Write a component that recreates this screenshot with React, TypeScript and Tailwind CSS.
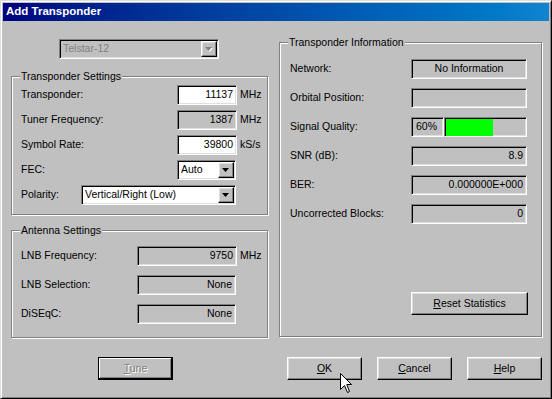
import React from "react";

const sunken =
  "border border-t-[#808080] border-l-[#808080] border-r-white border-b-white shadow-[inset_1px_1px_0_#000,inset_-1px_-1px_0_#dfdfdf]";
const raised =
  "border border-t-white border-l-white border-r-black border-b-black shadow-[inset_-1px_-1px_0_#808080,inset_1px_1px_0_#dfdfdf]";
const disabledText = "text-[#808080] [text-shadow:1px_1px_0_#fff]";

function Field({ value, w, white, center }: { value?: string; w: string; white?: boolean; center?: boolean }) {
  return (
    <div
      className={`${sunken} ${w} h-[20px] flex items-center px-[3px] ${white ? "bg-white" : "bg-[#c0c0c0]"} ${
        center ? "justify-center" : "justify-end"
      }`}
    >
      {value}
    </div>
  );
}

function Arrow({ disabled }: { disabled?: boolean }) {
  return (
    <svg width="8" height="5" viewBox="0 0 8 5" className="block">
      {disabled && <polygon points="1,1 8,1 4.5,5" fill="#fff" />}
      <polygon points="0,0 7,0 3.5,4" fill={disabled ? "#808080" : "#000"} />
    </svg>
  );
}

function Combo({ text, w, disabled }: { text: string; w: string; disabled?: boolean }) {
  return (
    <div className={`${sunken} ${w} h-[20px] flex items-center ${disabled ? "bg-[#c0c0c0]" : "bg-white"}`}>
      <span className={`flex-1 pl-[3px] truncate ${disabled ? "text-[#808080]" : ""}`}>{text}</span>
      <div className={`${raised} w-[16px] h-[16px] mr-[1px] bg-[#c0c0c0] flex items-center justify-center`}>
        <Arrow disabled={disabled} />
      </div>
    </div>
  );
}

function Button({
  label,
  hot,
  w,
  disabled,
  isDefault,
}: {
  label: string;
  hot: number;
  w: string;
  disabled?: boolean;
  isDefault?: boolean;
}) {
  const frame = isDefault
    ? "border border-black shadow-[inset_-1px_-1px_0_#000,inset_1px_1px_0_#fff,inset_-2px_-2px_0_#808080]"
    : raised;
  return (
    <div className={`${frame} ${w} h-[23px] bg-[#c0c0c0] flex items-center justify-center ${disabled ? disabledText : ""}`}>
      <span>
        {label.slice(0, hot)}
        <span className="underline underline-offset-[1px]">{label[hot]}</span>
        {label.slice(hot + 1)}
      </span>
    </div>
  );
}

function Group({ title, className, children }: { title: string; className: string; children: React.ReactNode }) {
  return (
    <div className={`relative border border-[#808080] shadow-[inset_1px_1px_0_#fff,1px_1px_0_#fff] ${className}`}>
      <span className="absolute left-[8px] -top-[7px] px-[1px] bg-[#c0c0c0] leading-[13px]">{title}</span>
      {children}
    </div>
  );
}

function Row({ label, lw, children }: { label: string; lw: string; children: React.ReactNode }) {
  return (
    <div className="flex items-center h-[20px]">
      <span className={lw}>{label}</span>
      {children}
    </div>
  );
}

export default function App() {
  return (
    <div className="w-[552px] h-[399px] bg-[#c0c0c0] p-[2px] border border-t-[#dfdfdf] border-l-[#dfdfdf] border-r-black border-b-black shadow-[inset_1px_1px_0_#fff,inset_-1px_-1px_0_#808080] font-['Liberation_Sans',Arial,sans-serif] text-[10.5px] text-black overflow-hidden">
      {/* title bar */}
      <div className="h-[18px] bg-gradient-to-r from-[#000080] to-[#1084d0] flex items-center pl-[3px]">
        <span className="text-white font-bold text-[11.5px]">Add Transponder</span>
      </div>

      <div className="flex h-[317px]">
        {/* left column */}
        <div className="ml-[8px] w-[257px] flex flex-col">
          <div className="mt-[18px] ml-[48px]">
            <Combo text="Telstar-12" w="w-[160px]" disabled />
          </div>

          <Group title="Transponder Settings" className="mt-[17px] h-[139px] pt-[8px] pl-[9px] flex flex-col gap-[5px]">
            <Row label="Transponder:" lw="w-[156px]">
              <Field value="11137" w="w-[60px]" white />
              <span className="ml-[3px]">MHz</span>
            </Row>
            <Row label="Tuner Frequency:" lw="w-[156px]">
              <Field value="1387" w="w-[60px]" />
              <span className="ml-[3px]">MHz</span>
            </Row>
            <Row label="Symbol Rate:" lw="w-[156px]">
              <Field value="39800" w="w-[60px]" white />
              <span className="ml-[3px]">kS/s</span>
            </Row>
            <Row label="FEC:" lw="w-[156px]">
              <Combo text="Auto" w="w-[59px]" />
            </Row>
            <Row label="Polarity:" lw="w-[60px]">
              <Combo text="Vertical/Right (Low)" w="w-[155px]" />
            </Row>
          </Group>

          <Group title="Antenna Settings" className="mt-[15px] h-[108px] pt-[15px] pl-[9px] flex flex-col gap-[9px]">
            <Row label="LNB Frequency:" lw="w-[116px]">
              <Field value="9750" w="w-[100px]" />
              <span className="ml-[3px]">MHz</span>
            </Row>
            <Row label="LNB Selection:" lw="w-[116px]">
              <Field value="None" w="w-[99px]" />
            </Row>
            <Row label="DiSEqC:" lw="w-[116px]">
              <Field value="None" w="w-[99px]" />
            </Row>
          </Group>
        </div>

        {/* right column */}
        <Group
          title="Transponder Information"
          className="ml-[11px] mt-[21px] w-[263px] h-[295px] pt-[16px] pl-[10px] flex flex-col gap-[9px]"
        >
          <Row label="Network:" lw="w-[121px]">
            <Field value="No Information" w="w-[116px]" center />
          </Row>
          <Row label="Orbital Position:" lw="w-[121px]">
            <Field w="w-[116px]" />
          </Row>
          <Row label="Signal Quality:" lw="w-[121px]">
            <div className={`${sunken} w-[33px] h-[20px] flex items-center pl-[4px]`}>60%</div>
            <div className={`${sunken} w-[83px] h-[20px] pt-[1px] pl-[1px] pb-0`}>
              <div className="w-[47px] h-full bg-[#00ff00]" />
            </div>
          </Row>
          <Row label="SNR (dB):" lw="w-[121px]">
            <Field value="8.9" w="w-[116px]" />
          </Row>
          <Row label="BER:" lw="w-[121px]">
            <Field value="0.000000E+000" w="w-[116px]" />
          </Row>
          <Row label="Uncorrected Blocks:" lw="w-[121px]">
            <Field value="0" w="w-[116px]" />
          </Row>
          <div className="mt-auto mb-[21px] ml-[121px]">
            <Button label="Reset Statistics" hot={0} w="w-[117px]" />
          </div>
        </Group>
      </div>

      {/* bottom buttons */}
      <div className="flex mt-[19px]">
        <div className="ml-[95px]">
          <Button label="Tune" hot={0} w="w-[75px]" disabled isDefault />
        </div>
        <div className="ml-[114px] relative">
          <Button label="OK" hot={0} w="w-[75px]" />
          <svg width="13" height="21" viewBox="0 0 13 21" className="absolute left-[53px] top-[16px]">
            <path d="M0.5 0.5 L0.5 16.5 L4.5 12.5 L7.5 19.5 L9.5 18.5 L6.8 11.5 L11.5 11.5 Z" fill="#fff" stroke="#000" strokeWidth="1" />
          </svg>
        </div>
        <div className="ml-[15px]">
          <Button label="Cancel" hot={0} w="w-[75px]" />
        </div>
        <div className="ml-[15px]">
          <Button label="Help" hot={0} w="w-[75px]" />
        </div>
      </div>
    </div>
  );
}
